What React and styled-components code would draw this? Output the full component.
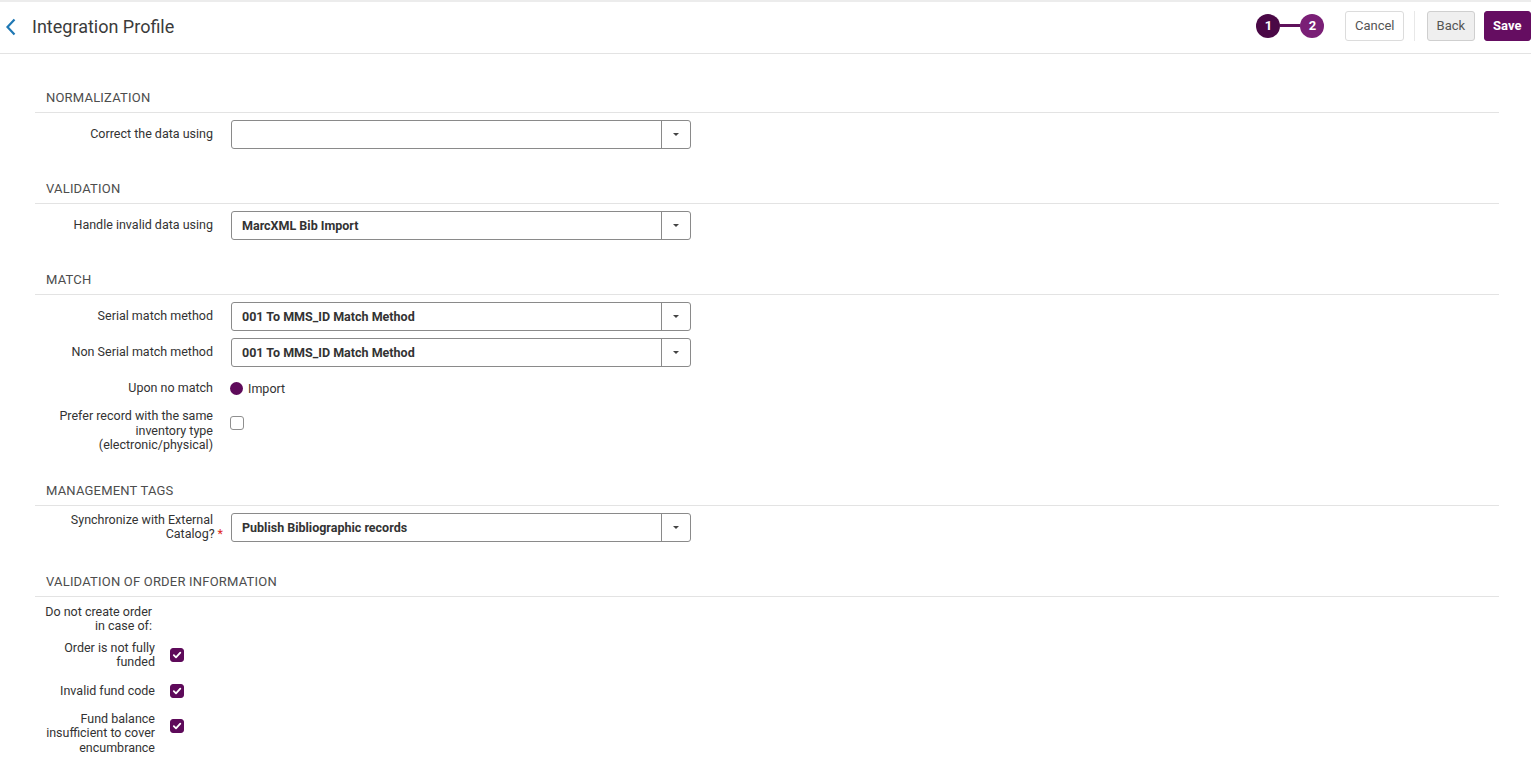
import styled, { createGlobalStyle } from "styled-components";

const GlobalStyle = createGlobalStyle`
  body {
    margin: 0;
    background: #fff;
    font-family: Roboto, "Liberation Sans", sans-serif;
    color: #333;
  }
`;

const sections = [
  {
    title: "Normalization",
    rows: [{ label: "Correct the data using", type: "select", value: "" }],
  },
  {
    title: "Validation",
    rows: [{ label: "Handle invalid data using", type: "select", value: "MarcXML Bib Import" }],
  },
  {
    title: "Match",
    rows: [
      { label: "Serial match method", type: "select", value: "001 To MMS_ID Match Method" },
      { label: "Non Serial match method", type: "select", value: "001 To MMS_ID Match Method" },
      { label: "Upon no match", type: "radio", value: "Import" },
      {
        label: ["Prefer record with the same", "inventory type", "(electronic/physical)"],
        type: "checkbox",
        checked: false,
      },
    ],
  },
  {
    title: "Management Tags",
    rows: [
      {
        label: ["Synchronize with External", "Catalog?"],
        required: true,
        type: "select",
        value: "Publish Bibliographic records",
      },
    ],
  },
];

const orderRows = [
  { label: ["Order is not fully", "funded"] },
  { label: ["Invalid fund code"] },
  { label: ["Fund balance", "insufficient to cover", "encumbrance"] },
];

function Label({ text, required, single }) {
  const lines = Array.isArray(text) ? text : [text];
  return (
    <LabelText $single={single && lines.length === 1}>
      {lines.map((l, i) => (
        <span key={i}>
          {l}
          {required && i === lines.length - 1 && <Required>*</Required>}
          {i < lines.length - 1 && <br />}
        </span>
      ))}
    </LabelText>
  );
}

function Field({ row }) {
  if (row.type === "select") {
    return (
      <Select>
        <SelectValue>{row.value}</SelectValue>
        <SelectToggle>
          <Caret />
        </SelectToggle>
      </Select>
    );
  }
  if (row.type === "radio") {
    return (
      <RadioWrap>
        <RadioDot />
        {row.value}
      </RadioWrap>
    );
  }
  return <CheckBox $checked={row.checked}>{row.checked && <Tick />}</CheckBox>;
}

function Tick() {
  return (
    <svg width="10" height="10" viewBox="0 0 10 10">
      <path d="M1.8 5.2 L4 7.4 L8.3 2.6" fill="none" stroke="#fff" strokeWidth="1.8" strokeLinecap="round" strokeLinejoin="round" />
    </svg>
  );
}

export default function App() {
  return (
    <>
      <GlobalStyle />
      <TopStrip />
      <Header>
        <BackLink aria-label="back">
          <svg width="12" height="18" viewBox="0 0 12 18">
            <path d="M9.5 1.5 L2.5 9 L9.5 16.5" fill="none" stroke="#1f78b4" strokeWidth="2.2" />
          </svg>
        </BackLink>
        <Title>Integration Profile</Title>
        <Actions>
          <Stepper>
            <Step $dark>1</Step>
            <StepLine />
            <Step>2</Step>
          </Stepper>
          <Button>Cancel</Button>
          <Divider />
          <Button $variant="grey">Back</Button>
          <Button $variant="primary">Save</Button>
        </Actions>
      </Header>

      <Content>
        {sections.map(sec => (
          <Section key={sec.title}>
            <SectionTitle>{sec.title}</SectionTitle>
            <Rows>
              {sec.rows.map((row, i) => (
                <Row key={i} $top={row.type === "checkbox"}>
                  <Label text={row.label} required={row.required} />
                  <Field row={row} />
                </Row>
              ))}
            </Rows>
          </Section>
        ))}

        <Section>
          <SectionTitle>Validation of order information</SectionTitle>
          <OrderRows>
            <OrderIntro>
              <Label text={["Do not create order", "in case of:"]} />
            </OrderIntro>
            {orderRows.map((row, i) => (
              <OrderRow key={i}>
                <Label text={row.label} single />
                <CheckBox $checked>
                  <Tick />
                </CheckBox>
              </OrderRow>
            ))}
          </OrderRows>
        </Section>
      </Content>
    </>
  );
}

const TopStrip = styled.div`
  height: 2px;
  background: #ececec;
`;

const Header = styled.header`
  display: flex;
  align-items: center;
  box-sizing: border-box;
  height: 52px;
  padding: 0 0 4px 5px;
  border-bottom: 1px solid #e3e3e3;
`;

const BackLink = styled.span`
  display: flex;
  align-items: center;
  width: 27px;
  margin-top: 2px;
`;

const Title = styled.h1`
  margin: 0;
  margin-top: 1px;
  font-size: 18px;
  font-weight: 400;
  color: #3b3b3b;
`;

const Actions = styled.div`
  margin-left: auto;
  display: flex;
  align-items: center;
`;

const Stepper = styled.div`
  display: flex;
  align-items: center;
  margin-right: 21px;
`;

const Step = styled.div`
  width: 24px;
  height: 24px;
  border-radius: 50%;
  display: flex;
  align-items: center;
  justify-content: center;
  font-size: 13px;
  font-weight: 700;
  color: #fff;
  background: ${p => (p.$dark ? "#4a0846" : "#7a1f76")};
`;

const StepLine = styled.div`
  width: 20px;
  height: 3px;
  background: #5f125b;
`;

const Button = styled.button`
  height: 30px;
  padding: 0 8.5px;
  border-radius: 3px;
  font-family: Roboto, "Liberation Sans", sans-serif;
  font-size: 13px;
  cursor: pointer;
  border: 1px solid
    ${p => (p.$variant === "primary" ? "#650d61" : p.$variant === "grey" ? "#cfcfcf" : "#dcdcdc")};
  background: ${p => (p.$variant === "primary" ? "#650d61" : p.$variant === "grey" ? "#efefef" : "#fff")};
  color: ${p => (p.$variant === "primary" ? "#fff" : "#555")};
  font-weight: ${p => (p.$variant === "primary" ? 700 : 400)};
  & + & {
    margin-left: 9px;
  }
`;

const Divider = styled.div`
  width: 1px;
  height: 30px;
  background: #e8e8e8;
  margin: 0 12px 0 10px;
`;

const Content = styled.main`
  padding: 0 32px 20px 35px;
`;

const Section = styled.section`
  margin-top: 32px;
  &:first-child {
    margin-top: 36px;
  }
`;

const SectionTitle = styled.h2`
  margin: 0;
  padding: 0 11px 6px;
  font-size: 13px;
  line-height: 16px;
  font-weight: 400;
  text-transform: uppercase;
  letter-spacing: 0.2px;
  color: #4d4d4d;
  border-bottom: 1px solid #e3e3e3;
`;

const Rows = styled.div`
  display: flex;
  flex-direction: column;
  gap: 7px;
  padding-top: 7px;
`;

const Row = styled.div`
  display: grid;
  grid-template-columns: 178px 460px;
  column-gap: 18px;
  align-items: ${p => (p.$top ? "start" : "center")};
  min-height: 28px;
  margin-bottom: ${p => (p.$top ? "-2px" : "0")};
  & > :last-child {
    margin-top: ${p => (p.$top ? "7px" : "0")};
  }
`;

const LabelText = styled.div`
  text-align: right;
  font-size: 12.5px;
  line-height: 14.5px;
  color: #333;
  padding-top: ${p => (p.$single ? "7px" : "0")};
`;

const Required = styled.span`
  color: #e0281e;
  margin-left: 3px;
  margin-right: -10px;
`;

const Select = styled.div`
  display: flex;
  box-sizing: border-box;
  height: 29px;
  border: 1px solid #8a8a8a;
  border-radius: 3px;
  background: #fff;
`;

const SelectValue = styled.div`
  flex: 1;
  display: flex;
  align-items: center;
  padding-left: 10px;
  font-size: 12.5px;
  font-weight: 700;
  color: #333;
`;

const SelectToggle = styled.div`
  width: 28px;
  border-left: 1px solid #8a8a8a;
  display: flex;
  align-items: center;
  justify-content: center;
`;

const Caret = styled.span`
  width: 0;
  height: 0;
  border-left: 3px solid transparent;
  border-right: 3px solid transparent;
  border-top: 3px solid #444;
`;

const RadioWrap = styled.label`
  display: flex;
  align-items: center;
  gap: 5px;
  margin-left: -1px;
  font-size: 12.5px;
  color: #333;
`;

const RadioDot = styled.span`
  width: 13px;
  height: 13px;
  border-radius: 50%;
  background: #5e0a5a;
`;

const CheckBox = styled.span`
  width: 14px;
  height: 14px;
  box-sizing: border-box;
  border-radius: 3px;
  display: flex;
  align-items: center;
  justify-content: center;
  margin-left: -1px;
  border: 1px solid ${p => (p.$checked ? "#5e0a5a" : "#8f8f8f")};
  background: ${p => (p.$checked ? "#5e0a5a" : "#fff")};
`;

const OrderRows = styled.div`
  display: flex;
  flex-direction: column;
  gap: 7px;
  padding-top: 8px;
`;

const OrderIntro = styled.div`
  width: 117px;
`;

const OrderRow = styled.div`
  display: grid;
  grid-template-columns: 120px 14px;
  column-gap: 16px;
  align-items: start;
  min-height: 28px;
  & > :last-child {
    margin-top: 7px;
  }
`;
